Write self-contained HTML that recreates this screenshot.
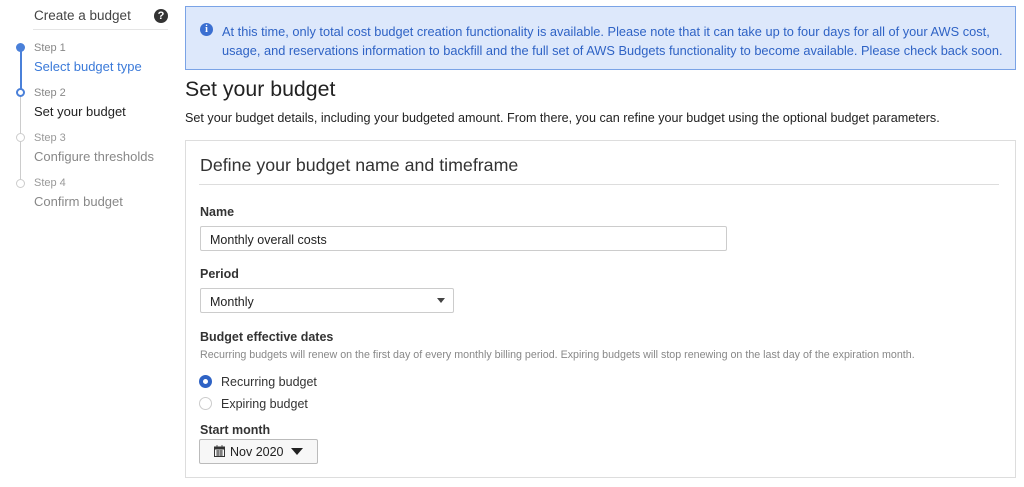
<!DOCTYPE html>
<html><head><meta charset="utf-8"><style>
*{box-sizing:border-box;margin:0;padding:0}
body{width:1024px;height:487px;background:#fff;font-family:"Liberation Sans",sans-serif;color:#16191f;position:relative;overflow:hidden}
.a{position:absolute;white-space:nowrap}
</style></head><body>
<div class="a" style="left:34px;top:8px;font-size:13.5px;color:#444">Create a budget</div>
<div class="a" style="left:154px;top:9px;width:14px;height:14px;border-radius:50%;background:#333;color:#fff;font-size:11px;font-weight:bold;text-align:center;line-height:14px">?</div>
<div class="a" style="left:33px;top:29px;width:135px;height:1px;background:#e5e5e5"></div>
<div class="a" style="left:20px;top:48px;width:2px;height:44px;background:#4a80d9"></div>
<div class="a" style="left:20px;top:92px;width:1px;height:92px;background:#ccc"></div>
<div class="a" style="left:16px;top:43px;width:9px;height:9px;border-radius:50%;background:#4a80d9"></div>
<div class="a" style="left:16px;top:88px;width:9px;height:9px;border-radius:50%;background:#fff;border:2px solid #4a80d9"></div>
<div class="a" style="left:16px;top:133px;width:9px;height:9px;border-radius:50%;background:#fff;border:1px solid #ccc"></div>
<div class="a" style="left:16px;top:179px;width:9px;height:9px;border-radius:50%;background:#fff;border:1px solid #ccc"></div>
<div class="a" style="left:34px;top:42px;font-size:11px;color:#888">Step 1</div>
<div class="a" style="left:34px;top:59px;font-size:13px;color:#3b7ad9">Select budget type</div>
<div class="a" style="left:34px;top:87px;font-size:11px;color:#888">Step 2</div>
<div class="a" style="left:34px;top:104px;font-size:13px;color:#222">Set your budget</div>
<div class="a" style="left:34px;top:132px;font-size:11px;color:#999">Step 3</div>
<div class="a" style="left:34px;top:149px;font-size:13px;color:#888">Configure thresholds</div>
<div class="a" style="left:34px;top:177px;font-size:11px;color:#999">Step 4</div>
<div class="a" style="left:34px;top:194px;font-size:13px;color:#888">Confirm budget</div>

<div class="a" style="left:185px;top:6px;width:831px;height:64px;background:#dde8fb;border:1px solid #7aa3e6"></div>
<div class="a" style="left:200px;top:23px;width:13px;height:13px;border-radius:50%;background:#3b6fd1;color:#fff;font-size:10px;font-weight:bold;text-align:center;line-height:13px;font-family:'Liberation Serif',serif">i</div>
<div class="a" style="left:222px;top:22px;font-size:12.8px;line-height:19px;color:#2f63c5">At this time, only total cost budget creation functionality is available. Please note that it can take up to four days for all of your AWS cost,<br>usage, and reservations information to backfill and the full set of AWS Budgets functionality to become available. Please check back soon.</div>

<div class="a" style="left:185px;top:77px;font-size:21.3px;color:#222">Set your budget</div>
<div class="a" style="left:185px;top:111px;font-size:12.6px;color:#222">Set your budget details, including your budgeted amount. From there, you can refine your budget using the optional budget parameters.</div>

<div class="a" style="left:185px;top:140px;width:831px;height:338px;border:1px solid #ddd"></div>
<div class="a" style="left:200px;top:155px;font-size:17.8px;color:#333">Define your budget name and timeframe</div>
<div class="a" style="left:199px;top:184px;width:800px;height:1px;background:#ddd"></div>
<div class="a" style="left:200px;top:205px;font-size:12.5px;font-weight:bold;color:#333">Name</div>
<div class="a" style="left:200px;top:226px;width:527px;height:25px;border:1px solid #ccc;border-radius:2px;font-size:12.5px;padding:6px 9px;color:#222">Monthly overall costs</div>
<div class="a" style="left:200px;top:267px;font-size:12.5px;font-weight:bold;color:#333">Period</div>
<div class="a" style="left:200px;top:288px;width:254px;height:25px;border:1px solid #ccc;border-radius:2px;font-size:12.5px;padding:6px 9px;color:#222">Monthly</div>
<div class="a" style="left:437px;top:298px;width:0;height:0;border-left:4.5px solid transparent;border-right:4.5px solid transparent;border-top:5px solid #444"></div>
<div class="a" style="left:200px;top:330px;font-size:12.5px;font-weight:bold;color:#333">Budget effective dates</div>
<div class="a" style="left:200px;top:349px;font-size:10.7px;color:#888">Recurring budgets will renew on the first day of every monthly billing period. Expiring budgets will stop renewing on the last day of the expiration month.</div>
<div class="a" style="left:199px;top:375px;width:13px;height:13px;border-radius:50%;border:4px solid #2f63c5;background:#fff"></div>
<div class="a" style="left:221px;top:375px;font-size:12.5px;color:#333">Recurring budget</div>
<div class="a" style="left:199px;top:397px;width:13px;height:13px;border-radius:50%;border:1px solid #ccc;background:#fff"></div>
<div class="a" style="left:221px;top:397px;font-size:12.5px;color:#333">Expiring budget</div>
<div class="a" style="left:200px;top:423px;font-size:12.5px;font-weight:bold;color:#333">Start month</div>
<div class="a" style="left:199px;top:439px;width:119px;height:25px;border:1px solid #bbb;border-radius:2px;background:#f7f7f7"></div>
<svg class="a" style="left:214px;top:445px" width="11" height="12" viewBox="0 0 11 12"><rect x="0.5" y="2" width="10" height="9.5" fill="none" stroke="#333"/><rect x="0.5" y="2" width="10" height="2.5" fill="#333"/><path d="M3 0v3M8 0v3M2 6h7M2 8h7M2 10h7M4 5v6M7 5v6" stroke="#333" stroke-width="0.8"/></svg>
<div class="a" style="left:230px;top:445px;font-size:12.5px;color:#222">Nov 2020</div>
<div class="a" style="left:291px;top:448px;width:0;height:0;border-left:6px solid transparent;border-right:6px solid transparent;border-top:7px solid #222"></div>
</body></html>
